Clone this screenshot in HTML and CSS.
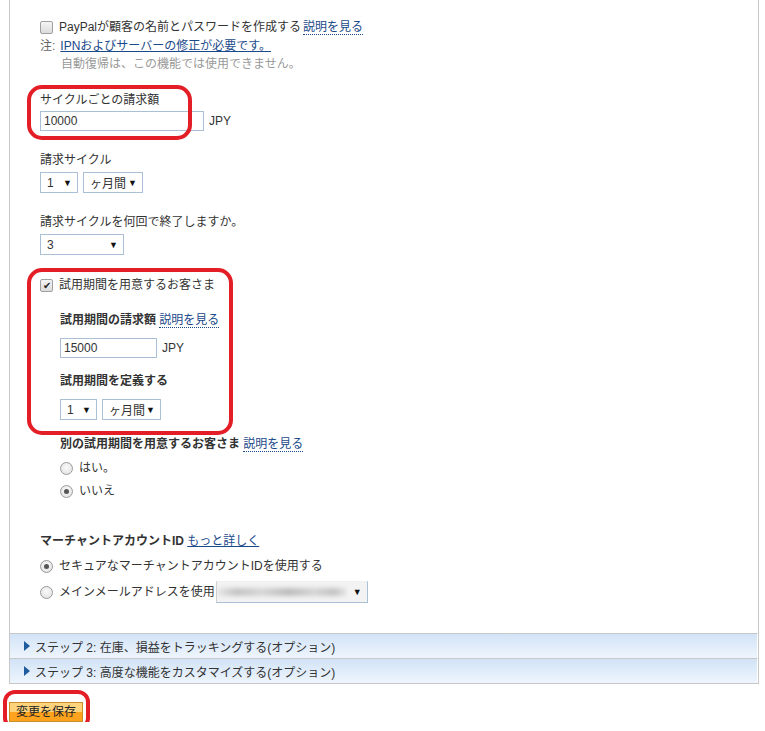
FILE: index.html
```html
<!DOCTYPE html>
<html lang="ja">
<head>
  <meta charset="UTF-8">
  <meta name="viewport" content="width=device-width, initial-scale=1.0">
  <title>定期支払いの設定</title>
  <link rel="stylesheet" href="styles.css">
</head>
<body>
  <div class="panel">
    <div class="panel-body">
      <div class="check-row">
        <span class="box"></span>
        <span>PayPalが顧客の名前とパスワードを作成する</span>
        <a class="help" href="#">説明を見る</a>
      </div>
      <div class="note">
        <span class="note-tag">注:</span>
        <a class="link" href="#">IPNおよびサーバーの修正が必要です。</a>
      </div>
      <div class="note-sub">自動復帰は、この機能では使用できません。</div>

      <div class="field first marked ring-amount">
        <div class="field-label">サイクルごとの請求額</div>
        <div class="field-control">
          <div class="input wide">10000</div>
          <span class="unit">JPY</span>
        </div>
      </div>

      <div class="field">
        <div class="field-label">請求サイクル</div>
        <div class="field-control selects">
          <div class="select num"><span>1</span><span class="arrow">▼</span></div>
          <div class="select period"><span>ヶ月間</span><span class="arrow">▼</span></div>
        </div>
      </div>

      <div class="field">
        <div class="field-label">請求サイクルを何回で終了しますか。</div>
        <div class="field-control selects">
          <div class="select count"><span>3</span><span class="arrow">▼</span></div>
        </div>
      </div>

      <div class="trial marked ring-trial">
        <div class="check-row">
          <span class="box checked">✔</span>
          <span>試用期間を用意するお客さま</span>
        </div>
        <div class="sub-field">
          <div class="field-label bold">試用期間の請求額 <a class="help" href="#">説明を見る</a></div>
          <div class="sub-control">
            <div class="input narrow">15000</div>
            <span class="unit">JPY</span>
          </div>
        </div>
        <div class="sub-field second">
          <div class="field-label bold">試用期間を定義する</div>
          <div class="sub-control selects">
            <div class="select num small"><span>1</span><span class="arrow">▼</span></div>
            <div class="select period small"><span>ヶ月間</span><span class="arrow">▼</span></div>
          </div>
        </div>
      </div>

      <div class="sub-field other">
        <div class="field-label bold">別の試用期間を用意するお客さま <a class="help" href="#">説明を見る</a></div>
        <div class="radio-row first-radio"><span class="radio"></span><span>はい。</span></div>
        <div class="radio-row"><span class="radio on"></span><span>いいえ</span></div>
      </div>

      <div class="merchant">
        <div class="field-label bold">マーチャントアカウントID <a class="link" href="#">もっと詳しく</a></div>
        <div class="radio-row secure"><span class="radio on"></span><span>セキュアなマーチャントアカウントIDを使用する</span></div>
        <div class="radio-row email">
          <span class="radio"></span><span>メインメールアドレスを使用</span>
          <div class="select blurred">
            <span class="blur-text"></span>
            <span class="arrow">▼</span>
          </div>
        </div>
      </div>
    </div>

    <div class="step"><span class="tri"></span>ステップ 2: 在庫、損益をトラッキングする(オプション)</div>
    <div class="step"><span class="tri"></span>ステップ 3: 高度な機能をカスタマイズする(オプション)</div>
  </div>

  <div class="save-wrap marked ring-save">
    <button class="save" type="button">変更を保存</button>
  </div>
</body>
</html>
```

FILE: styles.css
```css
*,
*::before,
*::after {
  box-sizing: border-box;
}

body {
  margin: 0;
  font-family: "Liberation Sans", "Noto Sans CJK JP", sans-serif;
  font-size: 12px;
  color: #333;
  background-color: #fff;
}

a {
  text-decoration: none;
}

.panel {
  margin-left: 9px;
  width: 750px;
  border: 1px solid #c8c8c8;
  border-top: none;
}

.panel-body {
  padding: 18px 30px 30px;
}

/* checkboxes and radios */
.check-row,
.radio-row {
  display: flex;
  align-items: center;
  height: 18px;
  line-height: 18px;
}

.box {
  width: 13px;
  height: 13px;
  margin-right: 6px;
  border: 1px solid #a0a0a0;
  border-radius: 2px;
  background: linear-gradient(#f4f4f4, #dcdcdc);
  font-size: 10px;
  line-height: 11px;
  text-align: center;
  color: #222;
}

.radio {
  width: 13px;
  height: 13px;
  margin-right: 6px;
  border: 1px solid #9a9a9a;
  border-radius: 50%;
  background: radial-gradient(circle at 50% 40%, #fafafa, #dedede);
  position: relative;
}

.radio.on::after {
  content: "";
  position: absolute;
  left: 3px;
  top: 3px;
  width: 5px;
  height: 5px;
  border-radius: 50%;
  background-color: #555;
}

.help {
  margin-left: 2px;
  color: #1a4a8a;
  border-bottom: 1px dotted #1a4a8a;
  line-height: 14px;
}

.field-label .help {
  margin-left: 0;
}

.link {
  color: #1a4a8a;
  text-decoration: underline;
}

.note {
  margin-top: 1px;
  line-height: 18px;
  color: #666;
}

.note-tag {
  display: inline-block;
  width: 17px;
}

.note-sub {
  padding-left: 21px;
  line-height: 18px;
  color: #999;
}

/* fields */
.field {
  margin-top: 20px;
}

.field.first {
  margin-top: 18px;
}

.field-label {
  line-height: 18px;
}

.field-label.bold {
  font-weight: bold;
}

.field-label .help,
.field-label .link {
  font-weight: normal;
}

.field-control {
  display: flex;
  align-items: center;
  margin-top: 2px;
}

.field-control.selects {
  margin-top: 3px;
}

.input {
  height: 20px;
  padding-left: 3px;
  border: 1px solid #a9c0d6;
  line-height: 18px;
  color: #333;
}

.input.wide {
  width: 164px;
}

.input.narrow {
  width: 97px;
}

.unit {
  margin-left: 5px;
}

.selects {
  display: flex;
  gap: 5px;
}

.select {
  display: flex;
  align-items: center;
  justify-content: space-between;
  height: 21px;
  padding: 0 5px 0 6px;
  border: 1px solid #a9c0d6;
  background-color: #fff;
}

.select .arrow {
  font-size: 9px;
  color: #111;
}

.select.num {
  width: 38px;
}

.select.period {
  width: 60px;
}

.select.count {
  width: 84px;
}

.select.small.num {
  width: 37px;
}

.select.small.period {
  width: 59px;
}

/* trial block */
.trial {
  margin-top: 21px;
}

.sub-field {
  margin-left: 20px;
  margin-top: 17px;
}

.sub-field.second {
  margin-top: 14px;
}

.sub-field.other {
  margin-top: 15px;
}

.sub-control {
  display: flex;
  align-items: center;
  margin-top: 9px;
}

.radio-row.first-radio {
  margin-top: 6px;
}

.other .radio-row + .radio-row {
  margin-top: 5px;
}

.merchant {
  margin-top: 32px;
}

.radio-row.secure {
  margin-top: 7px;
}

.radio-row.email {
  margin-top: 6px;
  height: 22px;
}

.select.blurred {
  width: 152px;
  height: 22px;
  margin-left: 1px;
  padding: 0 5px 0 0;
  border-color: #f0f0f0 #a9c0d6 #a9c0d6 #d0d0d0;
  background-color: #f3f3f3;
  overflow: hidden;
}

.blur-text {
  width: 130px;
  height: 8px;
  border-radius: 4px;
  background: linear-gradient(90deg, #e6e6e6 0%, #c4c4c4 15%, #d6d6d6 35%, #bcbcbc 55%, #d4d4d4 75%, #c2c2c2 90%, #e6e6e6 100%);
  filter: blur(2px);
}

/* collapsed steps */
.step {
  display: flex;
  align-items: center;
  height: 25px;
  padding-left: 14px;
  border-top: 1px solid #c8c8c8;
  border-right: 1px solid #fff;
  background: linear-gradient(#d2e3f6, #eef5fd);
  color: #333;
}

.tri {
  width: 0;
  height: 0;
  margin-right: 5px;
  border-left: 6px solid #1f5c9e;
  border-top: 5px solid transparent;
  border-bottom: 5px solid transparent;
}

/* save */
.save-wrap {
  display: inline-block;
  margin: 18px 0 0 9px;
}

.save {
  display: block;
  width: 74px;
  height: 20px;
  padding: 0;
  border: 1px solid #c98f2a;
  background: linear-gradient(#ffd27c 50%, #ffa31e 50%);
  font-family: inherit;
  font-size: 12px;
  line-height: 18px;
  color: #222;
}

/* red annotation rings */
.marked {
  position: relative;
}

.marked::after {
  content: "";
  position: absolute;
  border: 4px solid #e41e26;
  border-radius: 15px;
  pointer-events: none;
}

.ring-amount::after {
  left: -13px;
  top: -6px;
  width: 165px;
  height: 55px;
}

.ring-trial::after {
  left: -13px;
  top: -8px;
  width: 206px;
  height: 167px;
}

.ring-save::after {
  left: -6px;
  top: -12px;
  width: 87px;
  height: 40px;
  border-radius: 12px;
}
```
